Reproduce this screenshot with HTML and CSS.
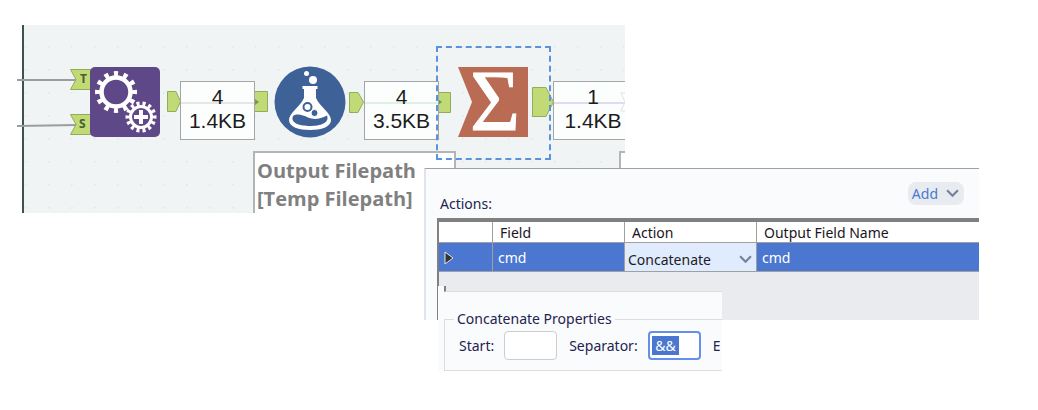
FILE: index.html
```html
<!DOCTYPE html>
<html lang="en">
<head>
    <meta charset="UTF-8">
    <meta name="viewport" content="width=device-width, initial-scale=1.0">
    <title>Summarize - Concatenate</title>
    <link rel="stylesheet" href="styles.css">
</head>
<body>
    <div class="workflow">
        <svg class="wires" width="608" height="188" viewBox="-5 0 608 188">
            <g stroke="#9a9d9d" stroke-width="2">
                <path d="M-5 55H55"/>
                <path d="M-5 101L55 100"/>
            </g>
            <g fill="#c1da76" stroke="#8fae5c" stroke-width="1">
                <path d="M48.500 44.500H69V64.500H48.500L54 54.500Z"/>
                <path d="M48.500 89.500H69V109.500H48.500L54 99.500Z"/>
                <path d="M145.500 66.500H154L158.500 76.500L154 86.500H145.500Z"/>
                <path d="M232.500 66.500H245.500V86.500H232.500Z"/>
                <path d="M327.500 67.500H336L341.500 77L336 87.500H327.500Z"/>
                <path d="M415.500 67.500H428.500V87.500H415.500Z"/>
                <path d="M510.500 62.500H524L531.500 77L524 91.500H510.500Z"/>
            </g>
            <path fill="#7f9160" d="M233 74L237 77L233 80Z"/>
            <path fill="#57a05e" d="M416 74L420 77L416 80Z"/>
        </svg>

        <span class="anchor-name anchor-t">T</span>
        <span class="anchor-name anchor-s">S</span>

        <svg class="tool tool-macro" viewBox="0 0 70 70">
            <rect width="70" height="70" rx="5" fill="#5f4887"/>
            <g fill="none" stroke="#fff">
                <circle cx="26" cy="25" r="14.500" stroke-width="4.500"/>
                <circle cx="26" cy="25" r="18.500" stroke-width="5" pathLength="120" stroke-dasharray="4.400 5.600" stroke-dashoffset="2.200"/>
                <circle cx="51" cy="50" r="10.500" stroke-width="3"/>
                <circle cx="51" cy="50" r="13.500" stroke-width="4" pathLength="140" stroke-dasharray="5 5" stroke-dashoffset="2.500"/>
                <path d="M51 43V57M44 50H58" stroke-width="4"/>
            </g>
        </svg>

        <svg class="tool tool-formula" viewBox="0 0 72 72">
            <circle cx="36" cy="36" r="35.500" fill="#3e6197"/>
            <circle cx="32.500" cy="7.500" r="2.500" fill="#fff"/>
            <circle cx="39" cy="14" r="4" fill="#fff"/>
            <path fill="#fff" d="M28.500 20H43.500V23H42V32C46 41 57 47 57 54C57 61 47 64 36 64S15 61 15 54C15 47 26 41 30 32V23H28.500Z"/>
            <path fill="#3e6197" d="M19 50C23 47 29 49 34 51.500C40 54 46 53 53 49.500C56 57 46 60 36 60S16 57 19 50Z"/>
            <circle cx="33.500" cy="41" r="4" fill="#fff" stroke="#3e6197" stroke-width="2"/>
            <circle cx="40.500" cy="47" r="3.500" fill="#3e6197" stroke="#fff"/>
        </svg>

        <svg class="tool tool-summarize" viewBox="0 0 70 70">
            <path fill="#ba6b53" d="M0 0H70V70H0L14 35Z"/>
            <text class="sigma" x="37" y="63" text-anchor="middle">Σ</text>
        </svg>

        <div class="count count-first">4<br>1.4KB</div>
        <div class="count count-second">4<br>3.5KB</div>
        <div class="count count-third">1<br>1.4KB</div>
        <svg class="next-anchor" viewBox="0 0 6 20"><path d="M6 1H1L5 10L1 19H6"/></svg>

        <div class="annotation">Output Filepath<br>[Temp Filepath]</div>
        <div class="annotation annotation-next"></div>
        <div class="selection"></div>
    </div>

    <div class="panel">
        <div class="panel-header">
            <span>Actions:</span>
            <button class="add-button" type="button">Add
                <svg class="chevron" viewBox="0 0 12 8"><path d="M1 1L6 6L11 1"/></svg>
            </button>
        </div>
        <div class="grid">
            <table class="actions">
                <thead>
                    <tr>
                        <th class="col-marker"></th>
                        <th class="col-field">Field</th>
                        <th class="col-action">Action</th>
                        <th>Output Field Name</th>
                    </tr>
                </thead>
                <tbody>
                    <tr>
                        <td><svg class="marker" viewBox="0 0 10 14"><path d="M1 1V13L9 7Z"/></svg></td>
                        <td>cmd</td>
                        <td class="action-cell">
                            <div class="action-box">
                                <select aria-label="Action">
                                    <option>Concatenate</option>
                                </select>
                                <svg class="chevron" viewBox="0 0 12 8"><path d="M1 1L6 6L11 1"/></svg>
                            </div>
                        </td>
                        <td>cmd</td>
                    </tr>
                </tbody>
            </table>
        </div>
    </div>

    <div class="properties">
        <div class="properties-top"></div>
        <fieldset>
            <legend>Concatenate Properties</legend>
            <div class="fields">
                <label for="start">Start:</label>
                <input id="start" type="text">
                <label class="separator-label" for="separator">Separator:</label>
                <input id="separator" type="text" value=" &amp;&amp; ">
                <span class="end-label">E</span>
            </div>
        </fieldset>
    </div>

    <script>
        const separator = document.getElementById("separator");
        separator.focus({ preventScroll: true });
        separator.select();
    </script>
</body>
</html>
```
FILE: styles.css
```css
* {
    box-sizing: border-box;
}
body {
    margin: 0;
    padding: 25px 22px;
    position: relative;
    min-height: 100vh;
    background: #fff;
    font-family: "Noto Sans", "Open Sans", sans-serif;
    font-size: 14px;
    line-height: 20px;
    color: #23234f;
}

/* workflow canvas */
.workflow {
    position: relative;
    width: 603px;
    height: 188px;
    background-color: #f0f4f5;
    background-image: radial-gradient(circle, #e4e9ea 1px, transparent 1px);
    background-size: 23px 23px;
    background-position: -10px 10px;
    border-left: 2px solid #3c5350;
    clip-path: inset(0 0 0 -5px);
}
.wires {
    position: absolute;
    left: -7px;
    top: 0;
}
.anchor-name {
    position: absolute;
    font-size: 12px;
    line-height: 20px;
    font-weight: bold;
    color: #44602f;
}
.anchor-t {
    left: 56px;
    top: 44px;
}
.anchor-s {
    left: 55px;
    top: 89px;
}
.tool {
    position: absolute;
    width: 70px;
    height: 70px;
    overflow: visible;
}
.tool-macro {
    left: 66px;
    top: 42px;
}
.tool-formula {
    left: 250px;
    top: 41px;
    width: 72px;
    height: 72px;
}
.tool-summarize {
    left: 434px;
    top: 42px;
}
.sigma {
    font-family: "Liberation Serif", serif;
    font-size: 86px;
    fill: #fff;
    stroke: #fff;
    stroke-width: 1px;
}
.count {
    position: absolute;
    top: 56px;
    width: 75px;
    height: 59px;
    padding-top: 3px;
    border: 1px solid #a3a5a6;
    background: linear-gradient(#e4e6e8, #e4e6e8) 0 20px / 100% 2px no-repeat #fcfefe;
    font-family: "Liberation Sans", Arial, sans-serif;
    font-size: 21px;
    line-height: 24px;
    text-align: center;
    color: #1c1c1c;
}
.count-first {
    left: 156px;
}
.count-second {
    left: 340px;
    background-image: linear-gradient(#dff0e4, #dff0e4);
}
.count-third {
    left: 529px;
    width: 80px;
    background-image: linear-gradient(#dedcf5, #dedcf5);
}
.next-anchor {
    position: absolute;
    left: 596px;
    top: 67px;
    width: 6px;
    height: 20px;
    fill: none;
    stroke: #e0e2e4;
}
.annotation {
    position: absolute;
    left: 229px;
    top: 126px;
    width: 203px;
    height: 70px;
    padding: 4px 2px;
    border: 2px solid #b4b6b6;
    background: #fff;
    font-family: "Open Sans", "Noto Sans", sans-serif;
    font-size: 20px;
    line-height: 28px;
    font-weight: bold;
    color: #808080;
}
.annotation-next {
    left: 595px;
}
.selection {
    position: absolute;
    left: 412px;
    top: 21px;
    width: 115px;
    height: 114px;
    border: 2px dashed #5b92dc;
}

/* configuration panel */
.panel {
    position: absolute;
    left: 424px;
    right: 59px;
    top: 168px;
    padding-left: 11px;
    border-top: 1px solid #a0a0a0;
    border-left: 2px solid #dfe3f0;
    background: #fafbfd;
}
.panel-header {
    display: flex;
    justify-content: space-between;
    align-items: flex-start;
    height: 49px;
    padding: 13px 15px 0 3px;
}
.panel-header span {
    padding-top: 12px;
}
.add-button {
    display: flex;
    align-items: center;
    gap: 8px;
    height: 23px;
    padding: 0 5px 0 4px;
    border: 0;
    border-radius: 8px;
    background: #e8ebf0;
    font: inherit;
    color: #4a7ad0;
}
.chevron {
    width: 13px;
    height: 9px;
    fill: none;
    stroke: #77809c;
    stroke-width: 2;
}
.grid {
    padding-bottom: 48px;
    border-top: 4px solid #808080;
    border-left: 2px solid #808080;
    background: #eaebef;
}
.actions {
    width: 100%;
    table-layout: fixed;
    border-spacing: 0;
    color: #1c1420;
}
.actions th,
.actions td {
    padding: 2px 5px 0;
    border-right: 1px solid #a0a0a0;
    border-bottom: 1px solid #a0a0a0;
    text-align: left;
    font-weight: normal;
    line-height: 18px;
}
.actions th {
    height: 21px;
    padding-left: 7px;
    background: #fff;
}
.actions td {
    height: 29px;
    background: #4b77d0;
    color: #fff;
}
.actions th:last-child,
.actions td:last-child {
    border-right: 0;
}
.col-marker {
    width: 54px;
}
.col-field,
.col-action {
    width: 132px;
}
.marker {
    display: block;
    width: 10px;
    height: 14px;
    fill: #333;
    stroke: #e8e8e8;
}
.actions .action-cell {
    padding: 5px 4px 0 3px;
    background: #e0ecfd;
}
.action-box {
    display: flex;
    align-items: center;
}
.action-box select {
    flex: 1;
    min-width: 0;
    padding: 0;
    border: 0;
    appearance: none;
    background: none;
    font: inherit;
    color: #1c1c28;
}

/* concatenate properties */
.properties {
    position: absolute;
    left: 438px;
    top: 286px;
    width: 284px;
    overflow: hidden;
    background: #fafbfd;
}
.properties-top {
    height: 6px;
    margin-left: 6px;
    border-left: 2px solid #808080;
    border-bottom: 1px solid #dcdde0;
    background: #eaebef;
}
fieldset {
    min-width: 0;
    margin: 17px -4px 0 6px;
    padding: 2px 0 10px 14px;
    border: 1px solid #dcdde0;
}
legend {
    margin-left: -5px;
    padding: 0 3px;
}
.fields {
    display: flex;
    align-items: center;
    white-space: nowrap;
}
.fields input {
    width: 53px;
    height: 29px;
    margin-left: 10px;
    padding: 0 2px;
    border: 1px solid #cccdd1;
    border-radius: 4px;
    background: #fff;
    font: inherit;
    color: #23234f;
}
.fields input:focus {
    border: 2px solid #6590ea;
    outline: none;
}
.fields input::selection {
    background: #4b77d0;
    color: #fff;
}
.separator-label {
    margin-left: 12px;
}
.end-label {
    margin-left: 12px;
}
```
